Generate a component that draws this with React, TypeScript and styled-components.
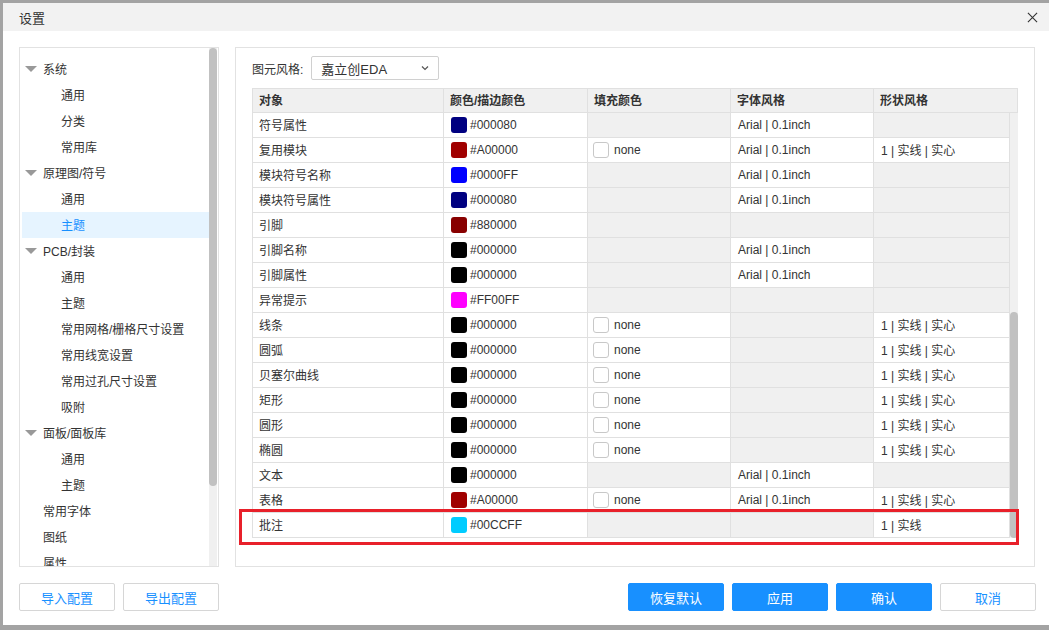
import React from "react"
import styled, { createGlobalStyle } from "styled-components"

const GlobalStyle = createGlobalStyle`
    html, body {
        margin: 0;
        padding: 0;
        background: #a3a3a3;
        font-family: "Liberation Sans", "Noto Sans CJK SC", sans-serif;
        font-size: 12px;
        color: #333;
    }
    * { box-sizing: border-box; }
`

type Row = {
    name: string
    color: string
    fill?: boolean
    font?: boolean
    shape?: string
}

const SOLID = "1 | 实线 | 实心"

const rows: Row[] = [
    { name: "符号属性", color: "#000080", font: true },
    { name: "复用模块", color: "#A00000", fill: true, font: true, shape: SOLID },
    { name: "模块符号名称", color: "#0000FF", font: true },
    { name: "模块符号属性", color: "#000080", font: true },
    { name: "引脚", color: "#880000" },
    { name: "引脚名称", color: "#000000", font: true },
    { name: "引脚属性", color: "#000000", font: true },
    { name: "异常提示", color: "#FF00FF" },
    { name: "线条", color: "#000000", fill: true, shape: SOLID },
    { name: "圆弧", color: "#000000", fill: true, shape: SOLID },
    { name: "贝塞尔曲线", color: "#000000", fill: true, shape: SOLID },
    { name: "矩形", color: "#000000", fill: true, shape: SOLID },
    { name: "圆形", color: "#000000", fill: true, shape: SOLID },
    { name: "椭圆", color: "#000000", fill: true, shape: SOLID },
    { name: "文本", color: "#000000", font: true },
    { name: "表格", color: "#A00000", fill: true, font: true, shape: SOLID },
    { name: "批注", color: "#00CCFF", shape: "1 | 实线" },
]

type TreeItem = { label: string; level: 1 | 2; group?: boolean; active?: boolean }

const tree: TreeItem[] = [
    { label: "系统", level: 1, group: true },
    { label: "通用", level: 2 },
    { label: "分类", level: 2 },
    { label: "常用库", level: 2 },
    { label: "原理图/符号", level: 1, group: true },
    { label: "通用", level: 2 },
    { label: "主题", level: 2, active: true },
    { label: "PCB/封装", level: 1, group: true },
    { label: "通用", level: 2 },
    { label: "主题", level: 2 },
    { label: "常用网格/栅格尺寸设置", level: 2 },
    { label: "常用线宽设置", level: 2 },
    { label: "常用过孔尺寸设置", level: 2 },
    { label: "吸附", level: 2 },
    { label: "面板/面板库", level: 1, group: true },
    { label: "通用", level: 2 },
    { label: "主题", level: 2 },
    { label: "常用字体", level: 1 },
    { label: "图纸", level: 1 },
    { label: "属性", level: 1 },
]

export default function App() {
    return (
        <>
            <GlobalStyle />
            <Page>
                <Dialog>
                    <TitleBar>
                        <span>设置</span>
                        <CloseIcon viewBox="0 0 12 12">
                            <path d="M1 1 L11 11 M11 1 L1 11" stroke="#333" strokeWidth="1.2" fill="none" />
                        </CloseIcon>
                    </TitleBar>
                    <Body>
                        <TreePanel>
                            <TreeList>
                                {tree.map((t, i) => (
                                    <TreeRow key={i} $level={t.level} $active={t.active}>
                                        {t.group && <Caret />}
                                        {t.label}
                                    </TreeRow>
                                ))}
                            </TreeList>
                            <TreeScroll>
                                <TreeThumb />
                            </TreeScroll>
                        </TreePanel>
                        <ContentPanel>
                            <StyleBar>
                                <span>图元风格:</span>
                                <Select>
                                    <span>嘉立创EDA</span>
                                    <svg width="10" height="10" viewBox="0 0 10 10">
                                        <path d="M2 3.5 L5 6.5 L8 3.5" stroke="#555" strokeWidth="1.2" fill="none" />
                                    </svg>
                                </Select>
                            </StyleBar>
                            <Table>
                                <HeadRow>
                                    <HeadCell>对象</HeadCell>
                                    <HeadCell>颜色/描边颜色</HeadCell>
                                    <HeadCell>填充颜色</HeadCell>
                                    <HeadCell>字体风格</HeadCell>
                                    <HeadCell>形状风格</HeadCell>
                                </HeadRow>
                                <TableBody>
                                    <Rows>
                                        {rows.map((r) => (
                                            <BodyRow key={r.name}>
                                                <Cell>{r.name}</Cell>
                                                <Cell>
                                                    <Swatch style={{ background: r.color }} />
                                                    {r.color}
                                                </Cell>
                                                <Cell $empty={!r.fill} $tight>
                                                    {r.fill && (
                                                        <>
                                                            <CheckBox />
                                                            none
                                                        </>
                                                    )}
                                                </Cell>
                                                <Cell $empty={!r.font}>{r.font && "Arial | 0.1inch"}</Cell>
                                                <Cell $empty={!r.shape}>{r.shape}</Cell>
                                            </BodyRow>
                                        ))}
                                    </Rows>
                                    <TableScroll>
                                        <TableThumb />
                                    </TableScroll>
                                </TableBody>
                            </Table>
                            <Highlight />
                        </ContentPanel>
                    </Body>
                    <Footer>
                        <ButtonGroup>
                            <Button>导入配置</Button>
                            <Button>导出配置</Button>
                        </ButtonGroup>
                        <ButtonGroup>
                            <Button $primary>恢复默认</Button>
                            <Button $primary>应用</Button>
                            <Button $primary>确认</Button>
                            <Button>取消</Button>
                        </ButtonGroup>
                    </Footer>
                </Dialog>
            </Page>
        </>
    )
}

const Page = styled.div`
    width: 1049px;
    height: 630px;
    padding: 3px 0 5px 3px;
`

const Dialog = styled.div`
    background: #fff;
    width: 1046px;
    height: 622px;
    display: flex;
    flex-direction: column;
`

const TitleBar = styled.div`
    height: 28px;
    background: #f2f2f2;
    display: flex;
    align-items: center;
    justify-content: space-between;
    padding: 0 11px 0 16px;
    font-size: 13px;
    color: #333;
`

const CloseIcon = styled.svg`
    width: 11px;
    height: 11px;
`

const Body = styled.div`
    display: flex;
    gap: 16px;
    padding: 16px 13px 0 16px;
`

const TreePanel = styled.div`
    width: 200px;
    height: 520px;
    border: 1px solid #e2e2e2;
    display: flex;
    overflow: hidden;
`

const TreeList = styled.div`
    flex: 1;
    padding: 8px 0 0 2px;
`

const TreeRow = styled.div<{ $level: 1 | 2; $active?: boolean }>`
    height: 26px;
    display: flex;
    align-items: center;
    padding-bottom: 1px;
    position: relative;
    padding-left: ${(p) => (p.$level === 1 ? 21 : 39)}px;
    background: ${(p) => (p.$active ? "#e6f4ff" : "transparent")};
    color: ${(p) => (p.$active ? "#1890ff" : "#333")};
    white-space: nowrap;
`

const Caret = styled.span`
    position: absolute;
    left: 3px;
    top: 10px;
    width: 0;
    height: 0;
    border-left: 6px solid transparent;
    border-right: 6px solid transparent;
    border-top: 6px solid #999;
`

const TreeScroll = styled.div`
    width: 8px;
    margin-right: 1px;
    background: #f0f0f0;
`

const TreeThumb = styled.div`
    height: 438px;
    background: #c1c1c1;
    border-radius: 4px;
`

const ContentPanel = styled.div`
    position: relative;
    width: 800px;
    height: 520px;
    border: 1px solid #e2e2e2;
    padding: 8px 16px 0 16px;
`

const StyleBar = styled.div`
    display: flex;
    align-items: center;
    gap: 8px;
    height: 24px;
    margin-bottom: 8px;
`

const Select = styled.div`
    width: 128px;
    height: 24px;
    border: 1px solid #d0d0d0;
    border-radius: 2px;
    display: flex;
    align-items: center;
    justify-content: space-between;
    padding: 0 8px 0 9px;
    font-size: 13px;
`

const Table = styled.div`
    width: 766px;
`

const columns = "191px 144px 143px 143px 1fr"

const HeadRow = styled.div`
    display: grid;
    grid-template-columns: ${columns};
    height: 25px;
    background: #f0f0f0;
    border: 1px solid #e0e0e0;
    border-right: none;
`

const HeadCell = styled.div`
    display: flex;
    align-items: center;
    padding: 0 0 2px 6px;
    font-weight: 600;
    color: #333;
    border-right: 1px solid #e0e0e0;
`

const TableBody = styled.div`
    display: flex;
    height: 425px;
`

const Rows = styled.div`
    flex: 1;
`

const BodyRow = styled.div`
    display: grid;
    grid-template-columns: ${columns};
    height: 25px;
    border-bottom: 1px solid #e0e0e0;
    border-left: 1px solid #e0e0e0;
`

const Cell = styled.div<{ $empty?: boolean; $tight?: boolean }>`
    display: flex;
    align-items: center;
    gap: 3px;
    padding-bottom: 1px;
    padding-left: ${(p) => (p.$tight ? 5 : 7)}px;
    background: ${(p) => (p.$empty ? "#f0f0f0" : "#fff")};
    border-right: 1px solid #e0e0e0;
    white-space: nowrap;
    &:first-child {
        padding-left: 6px;
    }
    &:nth-child(2) {
        padding-left: 7px;
    }
`

const Swatch = styled.span`
    width: 16px;
    height: 16px;
    border-radius: 3px;
    flex: none;
`

const CheckBox = styled.span`
    width: 16px;
    height: 16px;
    border: 1px solid #c8c8c8;
    border-radius: 3px;
    background: #fff;
    margin-right: 2px;
    flex: none;
`

const TableScroll = styled.div`
    width: 8px;
    background: #f0f0f0;
    display: flex;
    flex-direction: column;
    justify-content: flex-end;
`

const TableThumb = styled.div`
    height: 226px;
    background: #c1c1c1;
    border-radius: 4px;
`

const Highlight = styled.div`
    position: absolute;
    left: 3px;
    top: 461px;
    width: 780px;
    height: 36px;
    border: 3px solid #e8202a;
    pointer-events: none;
`

const Footer = styled.div`
    display: flex;
    justify-content: space-between;
    padding: 16px 13px 0 16px;
`

const ButtonGroup = styled.div`
    display: flex;
    gap: 8px;
`

const Button = styled.div<{ $primary?: boolean }>`
    width: 96px;
    height: 28px;
    display: flex;
    align-items: center;
    justify-content: center;
    border-radius: 2px;
    font-size: 13px;
    background: ${(p) => (p.$primary ? "#1890ff" : "#fff")};
    color: ${(p) => (p.$primary ? "#fff" : "#1890ff")};
    border: 1px solid ${(p) => (p.$primary ? "#1890ff" : "#d6d6d6")};
`
